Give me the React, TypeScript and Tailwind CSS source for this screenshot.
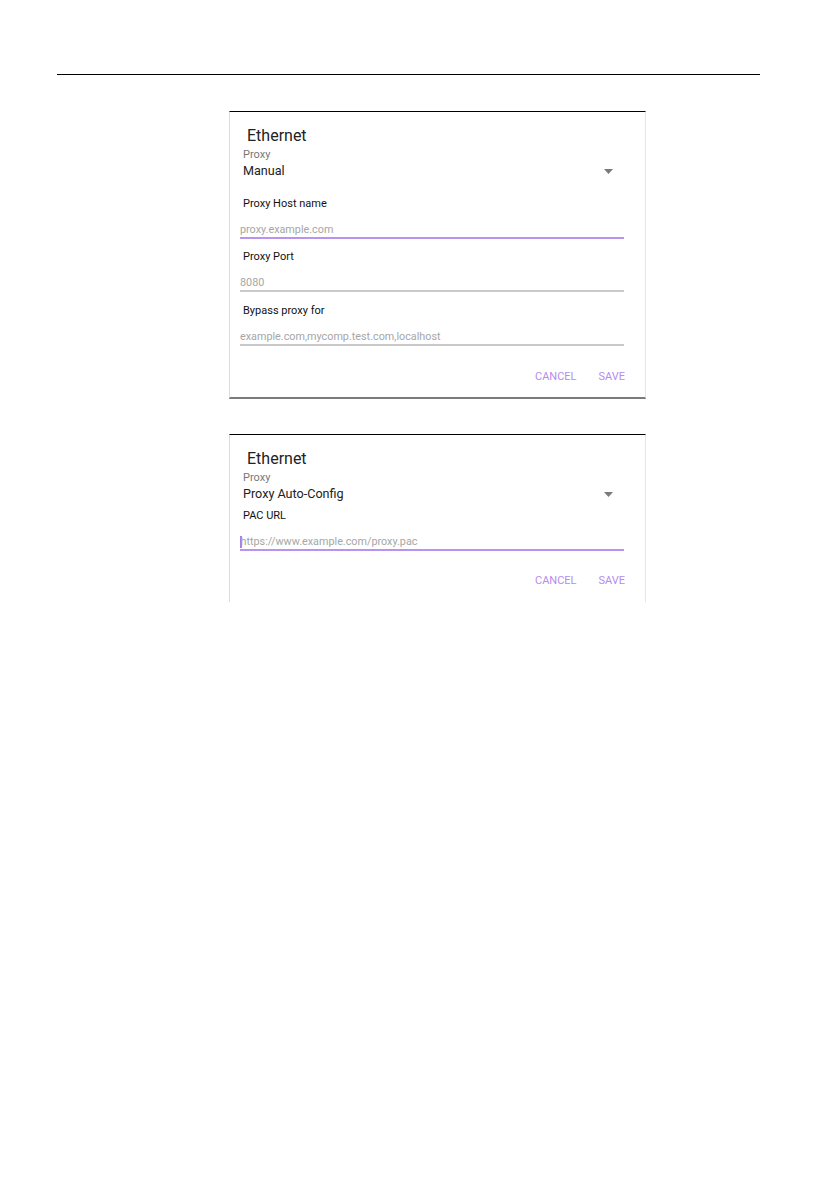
import React from "react";

const font = { fontFamily: "Roboto, 'Liberation Sans', sans-serif" };

function Arrow() {
  return (
    <svg width="9" height="5" viewBox="0 0 9 5" className="block">
      <path d="M0 0 L9 0 L4.5 5 Z" fill="#7a7a7a" />
    </svg>
  );
}

function Header({ value }: { value: string }) {
  return (
    <>
      <div className="ml-[4px] text-[16px] leading-[20px] text-[#222]">Ethernet</div>
      <div className="mt-[2px] text-[11px] leading-[13px] text-[#777]">Proxy</div>
      <div className="flex items-center justify-between pr-[11px] pt-[2px]">
        <div className="text-[12.6px] leading-[16px] text-[#222]">{value}</div>
        <Arrow />
      </div>
    </>
  );
}

function Field({
  label,
  placeholder,
  active,
  mt,
  cursor,
}: {
  label: string;
  placeholder: string;
  active?: boolean;
  mt: string;
  cursor?: boolean;
}) {
  return (
    <div className={mt}>
      <div className="text-[11px] leading-[13px] text-[#111]">{label}</div>
      <div
        className={
          "mt-[13px] -ml-[3px] flex items-center pb-[1px] text-[10.8px] leading-[13px] text-[#a6a6a6] border-b-2 " +
          (active ? "border-[#b893f2]" : "border-[#c9c9c9]")
        }
      >
        {cursor && <span className="inline-block w-[1.5px] h-[12px] bg-[#a97ef0] -mr-[1px]" />}
        <span>{placeholder}</span>
      </div>
    </div>
  );
}

function Buttons({ mt }: { mt: string }) {
  return (
    <div className={"flex justify-end gap-[22px] pr-[0px] -mr-[1px] text-[11px] leading-[13px] text-[#b58cf0] " + mt}>
      <span>CANCEL</span>
      <span>SAVE</span>
    </div>
  );
}

export default function App() {
  return (
    <div className="min-h-[1192px] w-[840px] bg-white pt-[74px]" style={font}>
      <div className="ml-[57px] w-[703px] h-px bg-black" />

      <div className="ml-[229px] mt-[36px] w-[417px] border-t border-t-black border-l border-l-[#dcdcdc] border-r border-r-[#e6e6e6] border-b-2 border-b-[#7a7a7a] pl-[13px] pr-[21px] pt-[14px] pb-[14px]">
        <Header value="Manual" />
        <Field mt="mt-[18px]" label="Proxy Host name" placeholder="proxy.example.com" active />
        <Field mt="mt-[11px]" label="Proxy Port" placeholder="8080" />
        <Field mt="mt-[12px]" label="Bypass proxy for" placeholder="example.com,mycomp.test.com,localhost" />
        <Buttons mt="mt-[24px]" />
      </div>

      <div className="ml-[229px] mt-[35px] w-[417px] border-t border-t-black border-l border-l-[#dcdcdc] border-r border-r-[#e6e6e6] pl-[13px] pr-[21px] pt-[14px] pb-[15px]">
        <Header value="Proxy Auto-Config" />
        <Field mt="mt-[7px]" label="PAC URL" placeholder="https://www.example.com/proxy.pac" active cursor />
        <Buttons mt="mt-[23px]" />
      </div>
    </div>
  );
}
